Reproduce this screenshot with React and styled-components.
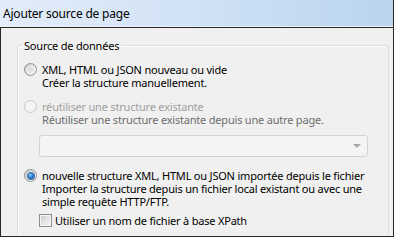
import React from 'react';
import styled, { createGlobalStyle } from 'styled-components';

const Global = createGlobalStyle`
  html, body { margin: 0; padding: 0; background: #ffffff; }
  body { font-family: "Noto Sans", "Open Sans", sans-serif; }
`;

const Window = styled.div`
  width: 394px;
  height: 237px;
  box-sizing: border-box;
  display: flex;
  flex-direction: column;
  border-right: 1px solid #262626;
  overflow: hidden;
  font-family: "Noto Sans", "Open Sans", sans-serif;
  font-size: 11px;
  letter-spacing: -0.2px;
  color: #000;
`;

const TitleBar = styled.div`
  height: 27px;
  flex: none;
  box-sizing: border-box;
  display: flex;
  align-items: center;
  padding-left: 3px;
  background: linear-gradient(90deg, #e3edfa 0%, #d0e2f5 50%, #bad4ef 100%);
  border-bottom: 1px solid #eef4fb;
  font-size: 12px;
`;

const Body = styled.div`
  flex: 1;
  min-height: 0;
  background: #f0f0f0;
  border-left: 1px solid #262626;
  border-top: 1px solid #262626;
  border-bottom: 1px solid #262626;
  overflow: hidden;
  padding: 10px 4px 0 16px;
`;

const Group = styled.fieldset`
  margin: 0;
  padding: 0;
  border: 1px solid #d5dfe5;
  border-radius: 3px;
  box-shadow: inset 1px 1px 0 #ffffff;
  height: 260px;
`;

const Legend = styled.legend`
  margin-left: 4px;
  padding: 0 2px;
  line-height: 15px;
  font-size: 11px;
`;

const Content = styled.div`
  padding: 10px 0 0 6px;
  display: flex;
  flex-direction: column;
`;

const Option = styled.div`
  display: grid;
  grid-template-columns: 13px 1fr;
  column-gap: 5px;
  margin-top: ${(p) => p.$mt || 0}px;
`;

const Lines = styled.div`
  display: flex;
  flex-direction: column;
`;

const Line = styled.div`
  line-height: 13px;
  white-space: nowrap;
  color: ${(p) => p.$color || '#000'};
`;

const Radio = styled.span`
  width: 13px;
  height: 13px;
  box-sizing: border-box;
  border-radius: 50%;
  position: relative;
  border: 1px solid ${(p) => (p.$disabled ? '#c8c8c8' : '#8e8f8f')};
  background: ${(p) =>
    p.$disabled
      ? '#f4f4f4'
      : 'radial-gradient(circle at 50% 50%, #d9d9d9 0, #e6e6e6 3px, #f6f6f6 5.5px)'};
  box-shadow: ${(p) => (p.$disabled ? 'none' : 'inset 1px 1px 1px #c9c9c9')};

  &::after {
    content: '';
    display: ${(p) => (p.$checked ? 'block' : 'none')};
    position: absolute;
    left: 2.5px;
    top: 2.5px;
    width: 6px;
    height: 6px;
    border-radius: 50%;
    background: radial-gradient(circle at 40% 35%, #8fd0ff 0, #2b7bd0 45%, #103f7e 100%);
    box-shadow: 0 0 0 1px #3a6ea5;
  }
`;

const Combo = styled.div`
  margin: 9px 0 0 15px;
  width: 329px;
  height: 22px;
  box-sizing: border-box;
  border: 1px solid #d3d3d3;
  border-radius: 3px;
  background: #f4f4f4;
  display: flex;
  align-items: center;
  justify-content: flex-end;
  padding-right: 6px;
`;

const Arrow = styled.span`
  width: 0;
  height: 0;
  border-left: 4px solid transparent;
  border-right: 4px solid transparent;
  border-top: 4px solid #a8a8a8;
`;

const CheckRow = styled.label`
  margin: 6px 0 0 15px;
  display: flex;
  align-items: center;
  gap: 3px;
  line-height: 13px;
`;

const Checkbox = styled.span`
  width: 13px;
  height: 13px;
  box-sizing: border-box;
  border: 1px solid #8e8f8f;
  background: linear-gradient(135deg, #cbcbcb 0%, #e6e6e6 55%, #f7f7f7 100%);
  box-shadow: inset 0 0 0 1px #f4f4f4;
`;

export default function App() {
  return (
    <>
      <Global />
      <Window>
        <TitleBar>Ajouter source de page</TitleBar>
        <Body>
          <Group>
            <Legend>Source de données</Legend>
            <Content>
              <Option>
                <Radio />
                <Lines>
                  <Line>XML, HTML ou JSON nouveau ou vide</Line>
                  <Line>Créer la structure manuellement.</Line>
                </Lines>
              </Option>
              <Option $mt={11}>
                <Radio $disabled />
                <Lines>
                  <Line $color="#a0a0a0">réutiliser une structure existante</Line>
                  <Line $color="#6d6d6d">Réutiliser une structure existante depuis une autre page.</Line>
                </Lines>
              </Option>
              <Combo>
                <Arrow />
              </Combo>
              <Option $mt={12}>
                <Radio $checked />
                <Lines>
                  <Line>nouvelle structure XML, HTML ou JSON importée depuis le fichier</Line>
                  <Line>Importer la structure depuis un fichier local existant ou avec une</Line>
                  <Line>simple requête HTTP/FTP.</Line>
                </Lines>
              </Option>
              <CheckRow>
                <Checkbox />
                <span>Utiliser un nom de fichier à base XPath</span>
              </CheckRow>
            </Content>
          </Group>
        </Body>
      </Window>
    </>
  );
}
